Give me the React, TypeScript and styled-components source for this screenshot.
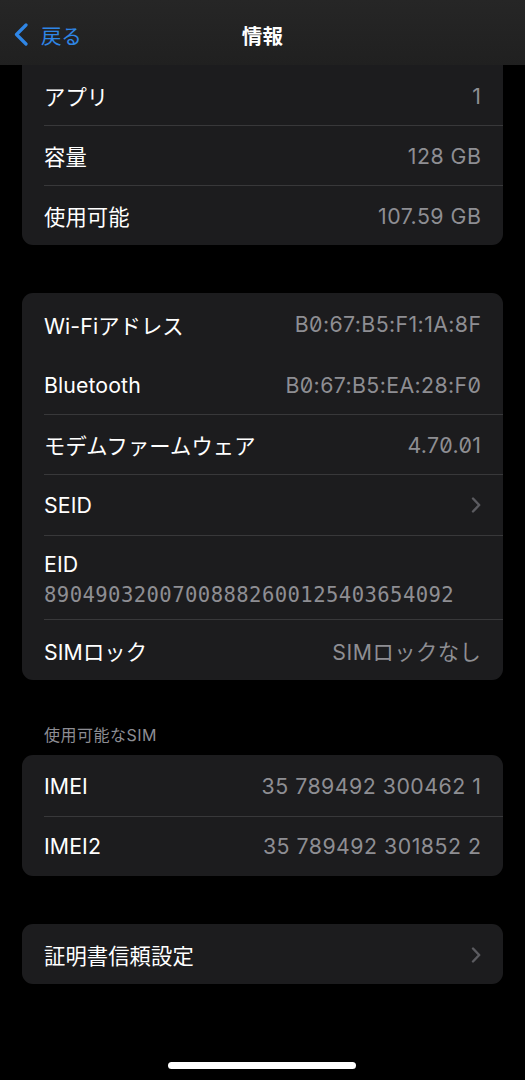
import React from "react";
import styled, { createGlobalStyle } from "styled-components";

const GlobalStyle = createGlobalStyle`
  html, body { margin: 0; padding: 0; background: #000; }
  * { box-sizing: border-box; }
`;

const FONT = `"Inter", "Noto Sans CJK JP", sans-serif`;

const Screen = styled.div`
  position: relative;
  width: 525px;
  height: 1080px;
  overflow: hidden;
  background: #000;
  display: flex;
  flex-direction: column;
  font-family: ${FONT};
  -webkit-font-smoothing: antialiased;
`;

const NavBar = styled.header`
  height: 65px;
  flex: none;
  display: grid;
  grid-template-columns: 1fr auto 1fr;
  align-items: center;
  padding: 4px 13px 0;
  background: linear-gradient(180deg, #262626 0%, #202020 100%);
`;

const BackButton = styled.div`
  display: flex;
  align-items: center;
  gap: 12px;
  color: #2f86e6;
  font-size: 20.5px;
  letter-spacing: -0.3px;
`;

const Title = styled.h1`
  margin: 0;
  color: #fff;
  font-size: 20.5px;
  font-weight: 700;
  letter-spacing: 0.2px;
`;

const Content = styled.main`
  display: flex;
  flex-direction: column;
  padding: 0 22px;
`;

const Group = styled.section<{ $flatTop?: boolean; $gap?: number }>`
  background: #1c1c1e;
  border-radius: ${(p) => (p.$flatTop ? "0 0 11px 11px" : "11px")};
  margin-top: ${(p) => p.$gap ?? 0}px;
  display: flex;
  flex-direction: column;
`;

const SectionLabel = styled.div`
  margin: 46px 0 10px 22px;
  color: #8d8d93;
  font-size: 16px;
  line-height: 19px;
  letter-spacing: 0.5px;
`;

const Row = styled.div<{ $noDivider?: boolean; $height?: number }>`
  height: ${(p) => p.$height ?? 60.5}px;
  margin-left: 22px;
  padding-right: 22px;
  display: flex;
  align-items: center;
  justify-content: space-between;
  border-top: 1px solid ${(p) => (p.$noDivider ? "transparent" : "#38383a")};
  &:first-child { border-top-color: transparent; }
`;

const StackedRow = styled(Row)`
  flex-direction: column;
  align-items: flex-start;
  justify-content: center;
  gap: 6px;
  padding-top: 2px;
`;

const Label = styled.span`
  color: #fff;
  font-size: 21.3px;
  letter-spacing: 0.1px;
`;

const Value = styled.span<{ $mono?: boolean }>`
  color: #8e8e93;
  font-size: 21.3px;
  font-feature-settings: ${(p) => (p.$mono ? `"zero"` : `normal`)};
  letter-spacing: ${(p) => (p.$mono ? "0.4px" : "0.5px")};
  margin-right: -0.4px;
`;

const EidValue = styled.span`
  color: #8e8e93;
  font-family: "DejaVu Sans Mono", monospace;
  font-size: 20.6px;
  letter-spacing: 0.42px;
`;

const HomeIndicator = styled.div`
  position: absolute;
  left: 168px;
  bottom: 11px;
  width: 188px;
  height: 7px;
  border-radius: 4px;
  background: #fff;
`;

const BackChevron = () => (
  <svg width="16" height="23" viewBox="0 0 16 23" fill="none">
    <path d="M13 2 L3.5 11.5 L13 21" stroke="#2f86e6" strokeWidth="3.2" strokeLinecap="round" strokeLinejoin="round" />
  </svg>
);

const Chevron = () => (
  <svg width="10" height="16" viewBox="0 0 10 16" fill="none">
    <path d="M2 1.5 L8.2 8 L2 14.5" stroke="#5b5b60" strokeWidth="2.4" strokeLinecap="round" strokeLinejoin="round" />
  </svg>
);

export default function App() {
  return (
    <>
      <GlobalStyle />
      <Screen>
        <NavBar>
          <BackButton>
            <BackChevron />
            <span>戻る</span>
          </BackButton>
          <Title>情報</Title>
          <div />
        </NavBar>
        <Content>
          <Group $flatTop>
            <Row $height={60}>
              <Label>アプリ</Label>
              <Value>1</Value>
            </Row>
            <Row $height={60}>
              <Label>容量</Label>
              <Value>128 GB</Value>
            </Row>
            <Row $height={60}>
              <Label>使用可能</Label>
              <Value>107.59 GB</Value>
            </Row>
          </Group>

          <Group $gap={48}>
            <Row $height={61}>
              <Label>Wi-Fiアドレス</Label>
              <Value $mono>B0:67:B5:F1:1A:8F</Value>
            </Row>
            <Row $noDivider $height={60}>
              <Label>Bluetooth</Label>
              <Value $mono>B0:67:B5:EA:28:F0</Value>
            </Row>
            <Row $height={60}>
              <Label>モデムファームウェア</Label>
              <Value $mono>4.70.01</Value>
            </Row>
            <Row $height={61}>
              <Label>SEID</Label>
              <Chevron />
            </Row>
            <StackedRow $height={84}>
              <Label>EID</Label>
              <EidValue>89049032007008882600125403654092</EidValue>
            </StackedRow>
            <Row $height={61}>
              <Label>SIMロック</Label>
              <Value>SIMロックなし</Value>
            </Row>
          </Group>

          <SectionLabel>使用可能なSIM</SectionLabel>
          <Group>
            <Row>
              <Label>IMEI</Label>
              <Value>35 789492 300462 1</Value>
            </Row>
            <Row>
              <Label>IMEI2</Label>
              <Value>35 789492 301852 2</Value>
            </Row>
          </Group>

          <Group $gap={48}>
            <Row $height={60}>
              <Label>証明書信頼設定</Label>
              <Chevron />
            </Row>
          </Group>
        </Content>
        <HomeIndicator />
      </Screen>
    </>
  );
}
